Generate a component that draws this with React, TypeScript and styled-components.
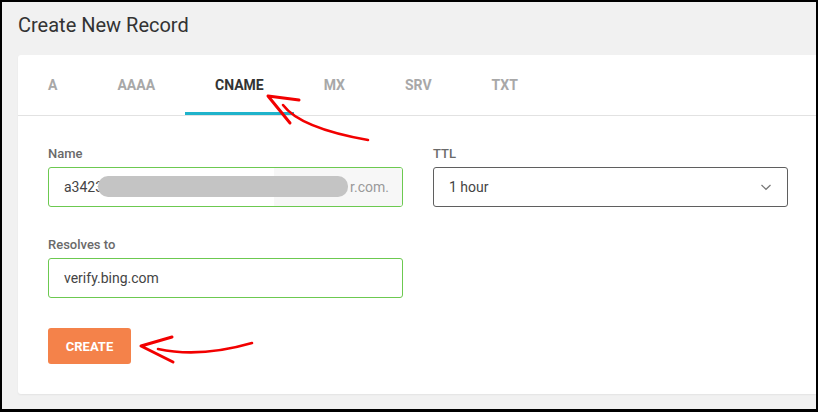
import { FC } from 'react';
import styled, { createGlobalStyle } from 'styled-components';

const GlobalStyle = createGlobalStyle`
  html, body {
    margin: 0;
    padding: 0;
    background: #000;
  }
  body {
    font-family: Roboto, "Liberation Sans", Arial, sans-serif;
  }
`;

const Frame = styled.div`
  position: relative;
  box-sizing: border-box;
  width: 818px;
  height: 412px;
  border: 2px solid #000;
  border-bottom-width: 3px;
  background: #f1f1f1;
  overflow: hidden;
`;

const Title = styled.h1`
  margin: 11px 0 18px 16px;
  font-size: 20px;
  line-height: 24px;
  font-weight: 400;
  color: #333;
`;

const Card = styled.div`
  margin-left: 16px;
  background: #fff;
  border-radius: 3px 0 0 3px;
  box-shadow: 0 1px 2px rgba(0, 0, 0, 0.06);
`;

const Tabs = styled.div`
  display: flex;
  height: 60px;
  border-bottom: 1px solid #e2e2e2;
`;

const Tab = styled.div<{ $active?: boolean }>`
  position: relative;
  display: flex;
  align-items: center;
  padding: 0 30px;
  font-size: 14px;
  font-weight: 700;
  color: ${p => (p.$active ? '#333' : '#a8a8a8')};

  &::after {
    content: '';
    position: absolute;
    left: 0;
    right: 0;
    bottom: 0;
    height: 3px;
    background: ${p => (p.$active ? '#1fb3cb' : 'transparent')};
  }
`;

const Body = styled.div`
  padding: 30px;
`;

const Grid = styled.div`
  display: grid;
  grid-template-columns: 355px 355px;
  column-gap: 30px;
  row-gap: 30px;
`;

const Group = styled.div`
  display: flex;
  flex-direction: column;
`;

const Label = styled.div`
  font-size: 13px;
  line-height: 16px;
  font-weight: 500;
  color: #6a6a6a;
  margin-bottom: 5px;
`;

const Field = styled.div<{ $tone: 'ok' | 'plain' }>`
  position: relative;
  box-sizing: border-box;
  display: flex;
  height: 40px;
  border: 1px solid ${p => (p.$tone === 'ok' ? '#6cc950' : '#5f5f5f')};
  border-radius: 3px;
  overflow: hidden;
  font-size: 14px;
  color: #444;
`;

const Value = styled.div`
  flex: 1;
  display: flex;
  align-items: center;
  padding-left: 15px;
`;

const Suffix = styled.div`
  width: 128px;
  display: flex;
  align-items: center;
  justify-content: flex-end;
  padding-right: 13px;
  box-sizing: border-box;
  background: #f7f7f7;
  color: #9a9a9a;
`;

const Redaction = styled.span`
  position: absolute;
  left: 49px;
  top: 8px;
  width: 250px;
  height: 21px;
  border-radius: 10px;
  background: #c4c4c4;
`;

const Chevron = styled.svg`
  width: 12px;
  height: 8px;
  margin: 0 15px 0 0;
  align-self: center;
`;

const Button = styled.button`
  margin-top: 30px;
  width: 83px;
  height: 36px;
  border: none;
  border-radius: 3px;
  background: #f4824a;
  color: #fff;
  font-family: Roboto, "Liberation Sans", Arial, sans-serif;
  font-size: 13px;
  font-weight: 700;
`;

const Marks = styled.svg`
  position: absolute;
  top: -2px;
  left: -2px;
  pointer-events: none;
`;

const tabs = ['A', 'AAAA', 'CNAME', 'MX', 'SRV', 'TXT'];

const App: FC = () => (
  <>
    <GlobalStyle />
    <Frame>
      <Title>Create New Record</Title>
      <Card>
        <Tabs>
          {tabs.map(t => (
            <Tab key={t} $active={t === 'CNAME'}>{t}</Tab>
          ))}
        </Tabs>
        <Body>
          <Grid>
            <Group>
              <Label>Name</Label>
              <Field $tone="ok">
                <Value>a3423</Value>
                <Suffix>r.com.</Suffix>
                <Redaction />
              </Field>
            </Group>
            <Group>
              <Label>TTL</Label>
              <Field $tone="plain">
                <Value>1 hour</Value>
                <Chevron viewBox="0 0 12 8">
                  <polyline points="1.5,2 6,6.3 10.5,2" fill="none" stroke="#777" strokeWidth="1.2" />
                </Chevron>
              </Field>
            </Group>
            <Group>
              <Label>Resolves to</Label>
              <Field $tone="ok">
                <Value>verify.bing.com</Value>
              </Field>
            </Group>
          </Grid>
          <Button>CREATE</Button>
        </Body>
      </Card>
      <Marks width="818" height="412" viewBox="0 0 818 412">
        <g fill="none" stroke="#f20000" strokeLinecap="round" strokeLinejoin="round">
          <path d="M299 100 L268 96 L290 123" strokeWidth="3" />
          <path d="M283 105 Q300 128 368 140" strokeWidth="2.6" />
          <path d="M172 337 L141 346 L173 362" strokeWidth="3" />
          <path d="M158 349 Q200 358 252 343" strokeWidth="2.6" />
        </g>
      </Marks>
    </Frame>
  </>
);

export default App;
